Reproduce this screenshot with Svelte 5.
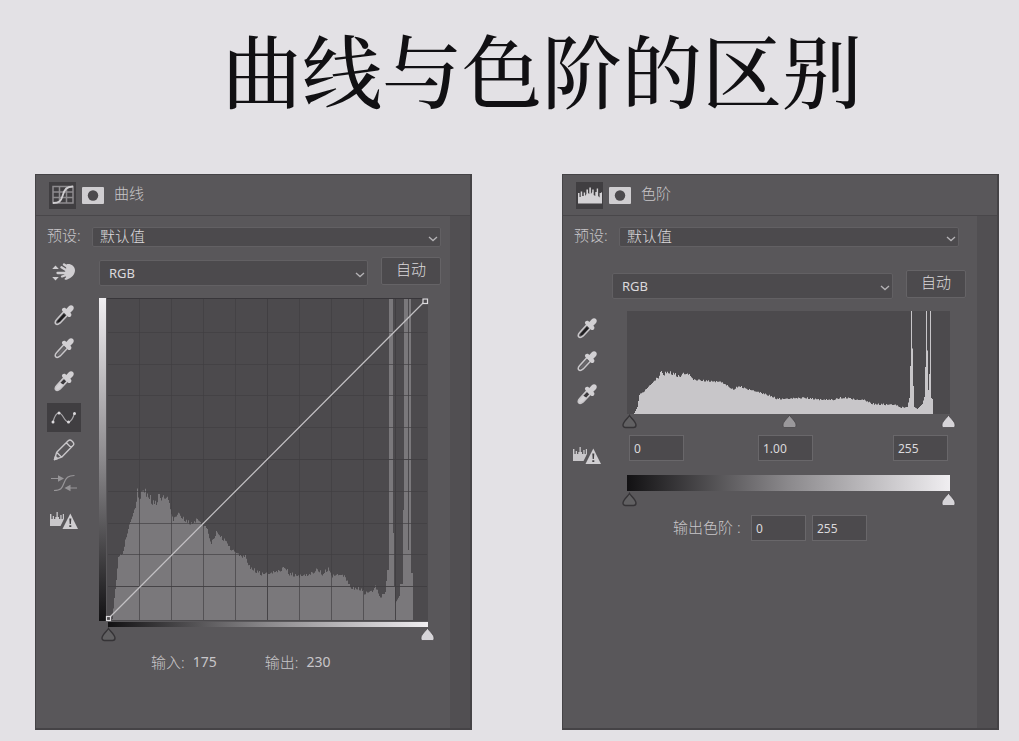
<script>
  // Tonal data as [position, height] pairs, read left to right.
  const curveTones = [
    [5, 1], [7, 22], [9, 40], [11, 63], [15, 66], [18, 79], [23, 98], [28, 112], [30, 116], [30, 130],
    [32, 118], [36, 131], [38, 127], [41, 124], [44, 119], [48, 115], [52, 126], [54, 118], [56, 122],
    [61, 120], [64, 105], [66, 99], [70, 106], [75, 102], [80, 98], [85, 96], [90, 101], [94, 95],
    [99, 92], [104, 76], [110, 89], [114, 82], [120, 78], [123, 70], [128, 68], [133, 63], [138, 63],
    [142, 53], [148, 49], [154, 46], [163, 46], [171, 48], [178, 52], [182, 46], [190, 44], [201, 44],
    [210, 50], [215, 46], [221, 51], [225, 44], [233, 45], [238, 42], [243, 32], [253, 31], [257, 27],
    [265, 28], [268, 33], [273, 21], [278, 28], [280, 50], [281, 50], [282, 322], [285, 322], [286, 87],
    [287, 34], [288, 17], [292, 24], [293, 36], [295, 36], [296, 110], [297, 322], [300, 322], [301, 70], [302, 322],
    [303, 322], [304, 47], [305, 47], [306, 1]
  ];
  const levelTones = [
    [7, 1], [10, 7], [12, 19], [18, 24], [25, 31], [32, 37], [33, 42], [37, 39], [39, 42], [46, 40],
    [53, 37], [56, 40], [62, 39], [66, 34], [80, 33], [93, 32], [100, 28], [106, 24], [111, 28],
    [123, 24], [133, 21], [143, 18], [150, 15], [160, 15], [178, 16], [196, 14], [206, 14], [213, 16],
    [223, 16], [228, 14], [236, 14], [245, 10], [268, 9], [273, 6], [280, 7], [282, 16], [283, 48],
    [284, 103], [286, 28], [287, 7], [290, 5], [295, 10], [297, 17], [298, 47], [299, 103],
    [301, 24], [302, 40], [303, 103], [304, 16], [305, 15], [306, 1]
  ];

  function silhouette(points, base, roughness) {
    const noise = [0, 2, -1, 1, -2, 3, 0, -1, 2, -2, 1, 0, 3];
    const last = points[points.length - 1][0];
    let d = `M${points[0][0]} ${base}`;
    let k = 0;
    for (let x = points[0][0]; x < last; x++) {
      while (k < points.length - 2 && points[k + 1][0] <= x) k++;
      const [x0, h0] = points[k];
      const [x1, h1] = points[k + 1];
      const t = x1 === x0 ? 1 : (x - x0) / (x1 - x0);
      let h = h0 + (h1 - h0) * t;
      if (x > 12 && x < 278) {
        const peak = x > 28 && x < 62 ? 2 : 1;
        h += noise[(x * 5 + (x >> 3)) % 13] * roughness * peak;
      }
      d += `V${(base - Math.max(h, 0)).toFixed(1)}H${x + 1}`;
    }
    return d + `V${base}Z`;
  }

  const curveShape = silhouette(curveTones, 322, 0.7);
  const levelShape = silhouette(levelTones, 103, 0.3);
  const gridLines = [1, 2, 3, 4, 5, 6, 7, 8, 9];
  const pickers = [
    { name: '黑场', fill: '#1d1c1e', short: false },
    { name: '灰场', fill: '#6a686b', short: false },
    { name: '白场', fill: '#dddbde', short: true }
  ];

  let low = $state(0);
  let high = $state(255);
  let inBlack = $state(0);
  let inGamma = $state(50);
  let inWhite = $state(255);
  let outBlack = $state(0);
  let outWhite = $state(255);
</script>

{#snippet chevron()}
  <svg class="chevron" width="10" height="6" viewBox="0 0 10 6" aria-hidden="true">
    <path d="M1 1l4 3.6L9 1" fill="none" stroke="#b5b3b6" stroke-width="1.3" />
  </svg>
{/snippet}

{#snippet picker(p)}
  <button class="tool" aria-label={p.name}>
    <svg width="22" height="22" viewBox="0 0 22 22" aria-hidden="true">
      <path d="M11.3 7.2l3.6 3.6-7.7 8.1c-1.7 1.5-3.7 1.8-4.5.9-.8-.9-.2-2.8 1-4.2z" fill={p.short ? '#d4d2d5' : 'none'} stroke="#c8c6c9" stroke-width="1.5" />
      <path d={p.short ? 'M11 9l2.2 2.2-3 3.2-2.8-1.6z' : 'M10.8 9.8l1.8 1.8-6 6.2c-1 .8-2 .9-2.3.6-.3-.4 0-1.3.7-2.2z'} fill={p.short ? '#39373a' : p.fill} />
      <path d="M9.4 4.6c.8-1 2-1.2 2.9-.5l1 .8 2.5-2.6c1.2-1.3 3.1-1.4 4.2-.3s1 3-.2 4.2l-2.5 2.5.7.9c.7 1 .5 2-.3 2.8-.9.8-1.9.9-2.8 0L9.6 7.3c-.8-.8-.9-1.8-.2-2.7z" fill="#d2d0d3" />
    </svg>
  </button>
{/snippet}

{#snippet warn()}
  <button class="tool" aria-label="计算更准确的直方图">
    <svg width="28" height="18" viewBox="0 0 28 18" aria-hidden="true">
      <path d="M0 14V2h1.400v5h1.300V4h1.300v3h1.300V5h1.200V0h1.300v5h1.200v2h1.300V3h1.300v4h1.200V2H14v5l-3.500 7z" fill="#c9c7ca" />
      <path d="M20.300 1.500L28 17H12.500z" fill="#d0ced1" />
      <path d="M19.300 6.500h2l-.4 5.500h-1.200zM19.300 13.200h2v1.800h-2z" fill="#424043" />
    </svg>
  </button>
{/snippet}

{#snippet mask()}
  <svg width="22" height="17" viewBox="0 0 22 17" aria-hidden="true">
    <rect width="22" height="17" rx="1" fill="#d0ced1" />
    <circle cx="11" cy="8.500" r="5.200" fill="#4c4a4d" />
  </svg>
{/snippet}

<main>
  <h1>曲线与色阶的区别</h1>

  <div class="panels">
    <section class="panel">
      <header>
        <span class="badge">
          <svg width="22" height="20" viewBox="0 0 22 20" aria-hidden="true">
            <path d="M1 1.500h20v16.500H1zM1 7h20M1 12.500h20M7.500 1.500V18M14.500 1.500V18" fill="none" stroke="#8d8b8e" stroke-width="1.500" />
            <path d="M1 18c6 0 8-1.500 9.700-7.500S14.500 1.500 21 1.500" fill="none" stroke="#cfcdd0" stroke-width="1.800" />
          </svg>
        </span>
        {@render mask()}
        <h2>曲线</h2>
      </header>
      <div class="body">
        <div class="content">
          <div class="preset">
            <label for="curve-preset">预设:</label>
            <div class="picklist">
              <select id="curve-preset" class="slim"><option>默认值</option></select>
              {@render chevron()}
            </div>
          </div>

          <div class="work curves">
            <div class="tools">
              <button class="tool hand" aria-label="在图像上取样">
                <svg width="24" height="18" viewBox="0 0 24 18" aria-hidden="true">
                  <path d="M3.500 2.500L6.800 6H.2zM.2 14h6.600l-3.300 3.500z" fill="#d0ced1" />
                  <g fill="none" stroke="#d0ced1" stroke-width="2.300" stroke-linecap="round">
                    <path d="M5.500 10H15M12 1.500l6 4M9.500 4.300l6 3.700M10 13.500l6-2" />
                  </g>
                  <path d="M14.500 1.200C18.500.2 23 3 23 7.200c0 4.500-3.500 7.600-7.800 9.300-1.500.6-3.200 0-2.500-1 .4-.7 1.500-.9 1.500-1.800l-2.200-2.900 2-3.800z" fill="#d0ced1" />
                </svg>
              </button>
              {#each pickers as p}
                {@render picker(p)}
              {/each}
              <button class="tool active" aria-label="编辑点" aria-pressed="true">
                <svg width="26" height="14" viewBox="0 0 26 14" aria-hidden="true">
                  <path d="M2 11C3.500 5 5.500 2 8 2c4 0 5 9 9.500 9 3 0 4.500-4 6-8.500" fill="none" stroke="#a9a7aa" stroke-width="1.200" />
                  <g fill="#dcdadd"><circle cx="2" cy="11" r="1.500" /><circle cx="8" cy="2" r="1.500" /><circle cx="17.500" cy="11" r="1.500" /><circle cx="23.500" cy="2.500" r="1.500" /></g>
                </svg>
              </button>
              <button class="tool" aria-label="铅笔">
                <svg width="22" height="22" viewBox="0 0 22 22" fill="none" stroke="#c8c6c9" stroke-width="1.400" stroke-linejoin="round" aria-hidden="true">
                  <path d="M1.500 20.500l2.200-7.200L15.200 1.700c1.200-1 2.600-.8 3.700.3l1 1c1 1.100 1.200 2.400.1 3.600L8.600 18.200zM13.300 3.800l5 5M3.700 13.300l4.900 4.900" />
                  <path d="M1.500 20.500l1-3 2 2z" fill="#c8c6c9" />
                </svg>
              </button>
              <button class="tool" aria-label="平滑曲线">
                <svg width="26" height="18" viewBox="0 0 26 18" aria-hidden="true">
                  <path d="M3 16.500c7 0 8-2 10-7.500s4-7.500 10.500-7.500M0 4.500h9M26 14H16" fill="none" stroke="#979598" stroke-width="1.200" />
                  <path d="M7 1.200L13 4.500 7 7.800zM19.500 10.700l-6 3.300 6 3.300z" fill="#979598" />
                </svg>
              </button>
              {@render warn()}
            </div>

            <div class="stage">
              <div class="channel">
                <div class="picklist">
                  <select aria-label="通道"><option>RGB</option></select>
                  {@render chevron()}
                </div>
                <button class="auto">自动</button>
              </div>
              <div class="plot">
                <div class="ramp-y"></div>
                <svg class="graph" viewBox="0 0 321 323" aria-hidden="true">
                  <rect width="321" height="323" fill="#4c4a4d" />
                  <path d={curveShape} fill="#7a787b" />
                  <path d="M0 .5H321" stroke="#38363a" />
                  {#each gridLines as n}
                    <path d={`M${n * 32 + 0.5} 1V322M1 ${Math.round(n * 31.8) + 2.5}H320`} stroke="#403e41" stroke-opacity={n === 5 || n === 9 ? 0.9 : 0.65} />
                  {/each}
                  <path d="M2 320L318 3" stroke="#c4c2c5" stroke-width="1.200" />
                  <rect x="-.5" y="318.500" width="4" height="4" fill="#4c4a4d" stroke="#dddbde" stroke-width="1.200" />
                  <rect x="316" y="1" width="4.500" height="4.500" fill="#4c4a4d" stroke="#dddbde" stroke-width="1.200" />
                </svg>
              </div>
              <div class="ramp-x"></div>
              <div class="sliders">
                <input class="black" type="range" min="0" max="255" bind:value={low} aria-label="黑场" />
                <input class="white" type="range" min="0" max="255" bind:value={high} aria-label="白场" />
              </div>
              <dl class="readout">
                <div><dt>输入:</dt><dd>175</dd></div>
                <div><dt>输出:</dt><dd>230</dd></div>
              </dl>
            </div>
          </div>
        </div>
        <div class="gutter"></div>
      </div>
    </section>

    <section class="panel">
      <header>
        <span class="badge">
          <svg width="24" height="17" viewBox="0 0 24 17" aria-hidden="true">
            <path d="M0 16.500V6h1.500v4h1.200V4.500h1.500V9h1.500V5.500h1.400V9l1.300-2V2.500H10V6l1.300 1V.5h1.600V7l1.300-2V2.500h1.500V8l1.600 1V5h1.400V1.500h1.400V9l1.500 1.500V6h1.200l1.200-1v11.500z" fill="#d4d2d5" />
          </svg>
        </span>
        {@render mask()}
        <h2>色阶</h2>
      </header>
      <div class="body">
        <div class="content wide">
          <div class="preset short">
            <label for="level-preset">预设:</label>
            <div class="picklist">
              <select id="level-preset" class="slim"><option>默认值</option></select>
              {@render chevron()}
            </div>
          </div>

          <div class="work levels">
            <div class="tools">
              {#each pickers as p}
                {@render picker(p)}
              {/each}
              {@render warn()}
            </div>
            <div class="stage">
              <div class="channel">
                <div class="picklist">
                  <select aria-label="通道"><option>RGB</option></select>
                  {@render chevron()}
                </div>
                <button class="auto">自动</button>
              </div>
              <div class="tonal">
                <svg class="graph" viewBox="0 0 323 103" aria-hidden="true">
                  <rect width="323" height="103" fill="#4c4a4d" />
                  <path d={levelShape} fill="#c8c6c9" />
                </svg>
                <div class="sliders">
                  <input class="black" type="range" min="0" max="255" bind:value={inBlack} aria-label="阴影" />
                  <input class="gray" type="range" min="0" max="100" bind:value={inGamma} aria-label="中间调" />
                  <input class="white" type="range" min="0" max="255" bind:value={inWhite} aria-label="高光" />
                </div>
                <div class="values">
                  <input type="text" value="0" aria-label="阴影输入" />
                  <input type="text" value="1.00" aria-label="中间调输入" />
                  <input type="text" value="255" aria-label="高光输入" />
                </div>
                <div class="ramp"></div>
                <div class="sliders">
                  <input class="black" type="range" min="0" max="255" bind:value={outBlack} aria-label="输出阴影" />
                  <input class="white" type="range" min="0" max="255" bind:value={outWhite} aria-label="输出高光" />
                </div>
              </div>
              <div class="output">
                <label for="out-low">输出色阶 :</label>
                <input id="out-low" type="text" value="0" />
                <input type="text" value="255" aria-label="输出色阶上限" />
              </div>
            </div>
          </div>
        </div>
        <div class="gutter"></div>
      </div>
    </section>
  </div>
</main>

<style>
  :global(body) {
    background: #e3e1e5;
  }
  main {
    font-family: "Noto Sans", "Noto Sans CJK SC", sans-serif;
    font-size: 15px;
    color: #c8c6c9;
    padding: 0 20px 11px 35px;
  }
  main * {
    box-sizing: border-box;
  }
  h1 {
    margin: 0;
    padding: 28px 0 66px 50px;
    font-family: "Noto Serif CJK SC", "Source Han Serif SC", "Songti SC", SimSun, "Noto Sans CJK SC", serif;
    font-size: 80px;
    line-height: 80px;
    font-weight: 500;
    text-align: center;
    white-space: nowrap;
    color: #111013;
  }
  .panels {
    display: grid;
    grid-template-columns: 1fr 1fr;
    gap: 90px;
  }
  .panel {
    display: flex;
    flex-direction: column;
    min-width: 0;
    background: #59575a;
    border: solid #454346;
    border-width: 1px 2px 2px 1px;
    font-weight: 300;
  }
  header {
    display: flex;
    align-items: center;
    gap: 6px;
    height: 41px;
    padding-left: 13px;
    border-bottom: 1px solid #49474a;
  }
  .badge {
    display: flex;
    align-items: center;
    justify-content: center;
    width: 27px;
    height: 27px;
    background: #403e41;
  }
  h2 {
    margin: 0 0 0 4px;
    padding-bottom: 4px;
    font-size: 15px;
    line-height: 20px;
    font-weight: 300;
  }
  .body {
    flex: 1;
    display: grid;
    grid-template-columns: 1fr 20px;
  }
  .gutter {
    background: #514f52;
  }
  .content {
    min-width: 0;
    padding: 11px 9px 55px 11px;
  }
  .content.wide {
    padding-right: 11px;
  }
  .preset {
    display: flex;
    align-items: center;
    gap: 9px;
    height: 20px;
  }
  .preset.short {
    padding-right: 7px;
  }
  .preset label {
    width: 36px;
    padding-bottom: 4px;
    line-height: 20px;
    white-space: nowrap;
  }
  .picklist {
    position: relative;
    flex: 1;
    display: flex;
    min-width: 0;
  }
  select {
    appearance: none;
    width: 100%;
    height: 26px;
    margin: 0;
    padding: 0 24px 0 9px;
    border: 1px solid #626063;
    border-radius: 2px;
    background: #4c4a4d;
    color: #dbd9dc;
    font: 400 13px "Noto Sans", "Noto Sans CJK SC", sans-serif;
  }
  select.slim {
    height: 20px;
    padding: 0 24px 3px 7px;
    font-size: 15px;
    font-weight: 300;
    line-height: 16px;
  }
  .chevron {
    position: absolute;
    right: 3px;
    top: calc(50% - 1px);
  }
  .work {
    display: grid;
    margin-top: 10px;
  }
  .curves {
    grid-template-columns: 34px 1fr;
    gap: 18px;
  }
  .levels {
    grid-template-columns: 26px 1fr;
    gap: 12px;
    margin-top: 23px;
  }
  .tools {
    display: flex;
    flex-direction: column;
  }
  .levels .tools {
    padding-top: 41px;
  }
  .tool {
    display: flex;
    align-items: center;
    justify-content: center;
    height: 33px;
    padding: 0 1px 0 0;
    border: 0;
    background: none;
  }
  .tool svg {
    flex: none;
  }
  .tool.hand {
    height: 30px;
    margin-bottom: 11px;
  }
  .tool.active {
    height: 29px;
    margin: 6px 0 1px;
    background: #403e41;
  }
  .tool:last-child {
    margin-top: 5px;
  }
  .levels .tool:last-child {
    margin-top: 29px;
  }
  .stage {
    min-width: 0;
  }
  .channel {
    display: flex;
    align-items: flex-end;
    gap: 13px;
    height: 29px;
  }
  .auto {
    align-self: flex-start;
    width: 60px;
    height: 28px;
    padding: 0 0 5px;
    border: 1px solid #656366;
    border-radius: 2px;
    background: #4c4a4d;
    color: #dbd9dc;
    font: 300 15px "Noto Sans", "Noto Sans CJK SC", sans-serif;
  }
  .plot {
    display: flex;
    gap: 1px;
    margin: 12px 13px 0 0;
  }
  .ramp-y {
    width: 7px;
    background: linear-gradient(#f0eef1, #8b898c 50%, #121113);
  }
  .graph {
    display: block;
    flex: 1;
    min-width: 0;
    overflow: visible;
  }
  .ramp-x {
    height: 5px;
    margin: 1px 13px 0 9px;
    background: linear-gradient(90deg, #121113, #8b898c 50%, #f0eef1);
  }
  .sliders {
    display: grid;
    height: 16px;
  }
  .curves .sliders {
    margin: 0 6px 0 2px;
  }
  .sliders input {
    appearance: none;
    grid-area: 1 / 1;
    width: 100%;
    height: 16px;
    margin: 0;
    background: none;
    pointer-events: none;
  }
  .sliders input::-webkit-slider-thumb {
    appearance: none;
    width: 15px;
    height: 16px;
    border: 0;
    background: center / 15px 16px no-repeat;
    pointer-events: auto;
  }
  .sliders .black::-webkit-slider-thumb {
    background-image: url("data:image/svg+xml,%3Csvg xmlns='http://www.w3.org/2000/svg' width='15' height='16'%3E%3Cpath d='M7.5 1.5C8.5 3.5 14 7.500 14 11c0 1.500-.8 2.500-2.500 2.500H3.500C1.800 13.500 1 12.500 1 11 1 7.500 6.500 3.500 7.500 1.500z' fill='%23616062' stroke='%23353336' stroke-width='1.400'/%3E%3C/svg%3E");
  }
  .sliders .gray::-webkit-slider-thumb {
    background-image: url("data:image/svg+xml,%3Csvg xmlns='http://www.w3.org/2000/svg' width='15' height='16'%3E%3Cpath d='M7.500 1C8.500 3.500 14 7.500 14 11c0 1.500-.5 2.500-1.500 2.500h-10C1.500 13.500 1 12.500 1 11 1 7.500 6.500 3.500 7.500 1z' fill='%239a989b' stroke='%23434144' stroke-width='.7'/%3E%3C/svg%3E");
  }
  .sliders .white::-webkit-slider-thumb {
    background-image: url("data:image/svg+xml,%3Csvg xmlns='http://www.w3.org/2000/svg' width='15' height='16'%3E%3Cpath d='M7.500 1C8.500 3.500 14 7.500 14 11c0 1.500-.5 2.500-1.500 2.500h-10C1.500 13.500 1 12.500 1 11 1 7.500 6.500 3.500 7.500 1z' fill='%23d6d4d8' stroke='%23434144' stroke-width='.7'/%3E%3C/svg%3E");
  }
  .readout {
    display: flex;
    gap: 48px;
    margin: 9px 0 1px;
    padding-left: 52px;
    line-height: 20px;
    white-space: nowrap;
  }
  .readout div {
    display: flex;
    gap: 8px;
  }
  .readout dd {
    margin: 0;
    font-size: 14px;
    font-weight: 400;
  }
  .tonal {
    padding: 12px 16px 0 15px;
  }
  .tonal .sliders {
    margin: 0 -6px 0 -5px;
  }
  .values {
    display: grid;
    grid-template-columns: 43fr 45fr 54px;
    margin: 5px 3px 14px 2px;
  }
  input[type="text"] {
    width: 55px;
    height: 26px;
    padding: 0 4px;
    border: 1px solid #69676a;
    background: #4c4a4d;
    color: #dbd9dc;
    font: 400 12px "Noto Sans", sans-serif;
  }
  .ramp {
    height: 16px;
    margin-bottom: 1px;
    background: linear-gradient(90deg, #121113, #8b898c 50%, #f0eef1);
  }
  .output {
    display: flex;
    align-items: center;
    gap: 6px;
    margin-top: 7px;
    padding-left: 61px;
  }
  .output label {
    width: 72px;
    padding-bottom: 4px;
    white-space: nowrap;
  }
</style>
